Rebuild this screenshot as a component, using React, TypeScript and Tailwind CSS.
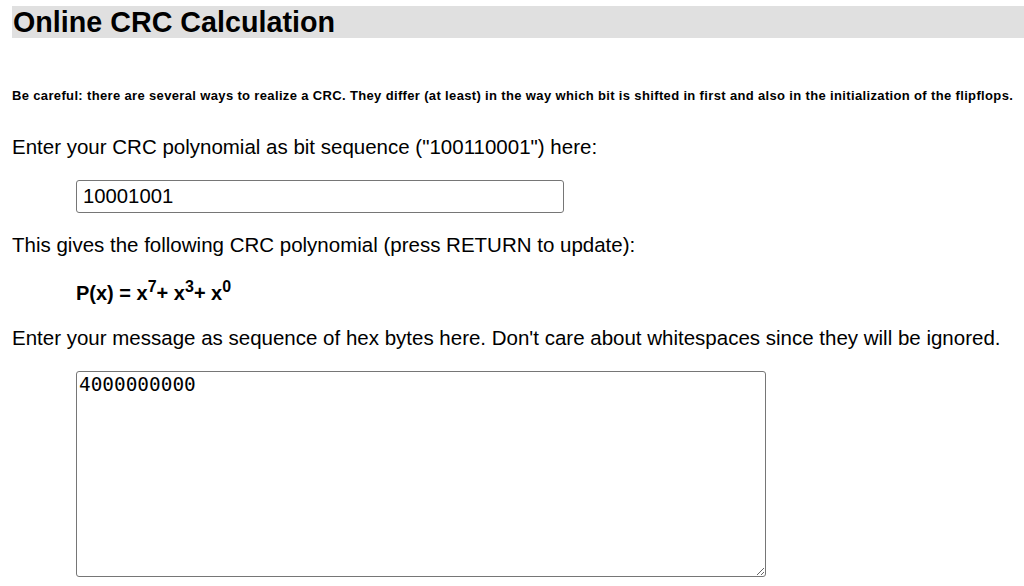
import React from "react";

export default function App() {
  return (
    <div className="min-h-[586px] bg-white text-black" style={{ fontFamily: '"Liberation Sans", Arial, sans-serif' }}>
      <div className="pt-[6px] pl-[12px]">
        <h1 className="h-[32px] bg-[#e0e0e0] text-[28.7px] leading-[32px] font-bold pl-[1px]">Online CRC Calculation</h1>
      </div>
      <div className="pl-[12px]">
        <p className="mt-[50px] text-[13px] tracking-[0.35px] leading-[16px] font-bold whitespace-nowrap">
          Be careful: there are several ways to realize a CRC. They differ (at least) in the way which bit is shifted in first and also in the initialization of the flipflops.
        </p>
        <p className="mt-[31px] text-[20.5px] leading-[24px]">Enter your CRC polynomial as bit sequence ("100110001") here:</p>
        <div className="mt-[21px] pl-[64px]">
          <input
            readOnly
            value="10001001"
            className="block w-[488px] h-[33px] border border-[#767676] rounded-[3px] px-[6px] text-[20.3px] outline-none"
            style={{ fontFamily: '"Liberation Sans", Arial, sans-serif' }}
          />
        </div>
        <p className="mt-[20px] text-[20.5px] leading-[24px]">This gives the following CRC polynomial (press RETURN to update):</p>
        <p className="mt-[24px] pl-[64px] text-[20px] leading-[24px] font-bold">
          P(x) = x<sup className="text-[16px] top-[-0.5em]">7</sup>+ x<sup className="text-[16px] top-[-0.5em]">3</sup>+ x<sup className="text-[16px] top-[-0.5em]">0</sup>
        </p>
        <p className="mt-[21px] text-[20.5px] leading-[24px] whitespace-nowrap">Enter your message as sequence of hex bytes here. Don't care about whitespaces since they will be ignored.</p>
        <div className="mt-[21px] pl-[64px]">
          <textarea
            readOnly
            value="4000000000"
            className="block w-[690px] h-[206px] border border-[#767676] rounded-[3px] px-[2px] py-[1px] text-[19.4px] leading-[24px] outline-none"
            style={{ fontFamily: '"DejaVu Sans Mono", "Liberation Mono", monospace' }}
          />
        </div>
      </div>
    </div>
  );
}
